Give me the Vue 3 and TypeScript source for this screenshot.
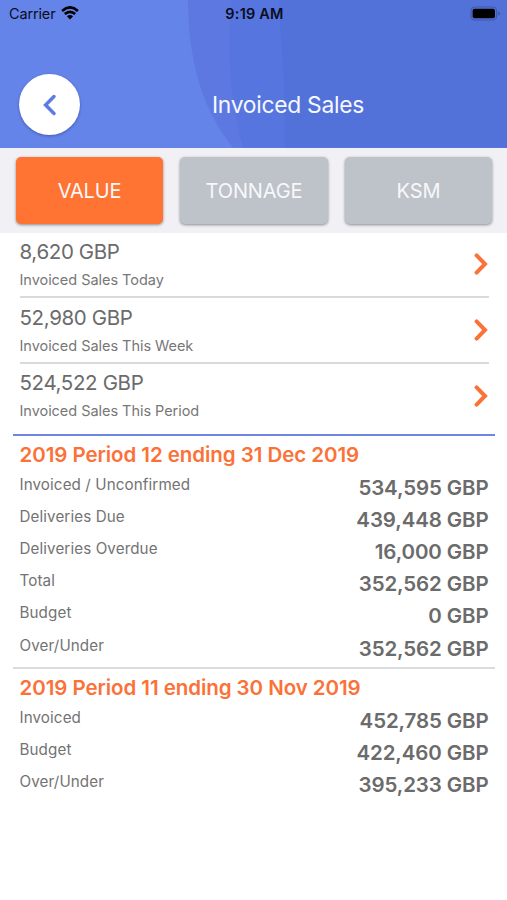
<script setup lang="ts">
import { ref } from 'vue'

interface Summary {
  amount: string
  label: string
}

interface Line {
  label: string
  value: string
}

interface Period {
  title: string
  lines: Line[]
}

const tabs: string[] = ['VALUE', 'TONNAGE', 'KSM']
const activeTab = ref<string>('VALUE')

const summaries: Summary[] = [
  { amount: '8,620 GBP', label: 'Invoiced Sales Today' },
  { amount: '52,980 GBP', label: 'Invoiced Sales This Week' },
  { amount: '524,522 GBP', label: 'Invoiced Sales This Period' },
]

const periods: Period[] = [
  {
    title: '2019 Period 12 ending 31 Dec 2019',
    lines: [
      { label: 'Invoiced / Unconfirmed', value: '534,595 GBP' },
      { label: 'Deliveries Due', value: '439,448 GBP' },
      { label: 'Deliveries Overdue', value: '16,000 GBP' },
      { label: 'Total', value: '352,562 GBP' },
      { label: 'Budget', value: '0 GBP' },
      { label: 'Over/Under', value: '352,562 GBP' },
    ],
  },
  {
    title: '2019 Period 11 ending 30 Nov 2019',
    lines: [
      { label: 'Invoiced', value: '452,785 GBP' },
      { label: 'Budget', value: '422,460 GBP' },
      { label: 'Over/Under', value: '395,233 GBP' },
    ],
  },
]
</script>

<template>
  <div class="screen">
    <header class="header">
      <svg class="backdrop" viewBox="0 0 507 148" preserveAspectRatio="none" aria-hidden="true">
        <path d="M188 0C188 60 202 110 233 148H507V0Z" fill="#5d79e1" />
        <path d="M231 0C228 50 229 100 243 148H507V0Z" fill="#5675df" />
        <path d="M279 0C280 40 286 70 285 148H507V0Z" fill="#5272da" />
      </svg>
      <div class="status">
        <div class="carrier">
          <span>Carrier</span>
          <svg class="wifi" viewBox="0 0 18 14" aria-hidden="true">
            <path d="M1.1 4.9Q9-2.1 16.9 4.9" />
            <path d="M3.8 8.1Q9 3.5 14.2 8.1" />
            <path class="dot" d="M5.9 10.3Q9 7.7 12.1 10.3L9 13.6Z" />
          </svg>
        </div>
        <div class="time">9:19 AM</div>
        <div class="power">
          <svg class="battery" viewBox="0 0 31 15" aria-hidden="true">
            <rect x="1" y="1" width="25.6" height="13" rx="3.8" fill="none" stroke="#3f58aa" stroke-width="1.2" />
            <rect x="2.6" y="2.7" width="22.4" height="9.6" rx="2" fill="#000" />
            <path d="M28 5.2Q30 6 30 7.5T28 9.8Z" fill="#3f58aa" />
          </svg>
        </div>
      </div>
      <div class="nav">
        <button class="back" type="button" aria-label="Back">
          <svg viewBox="0 0 14 22" aria-hidden="true">
            <path d="M11 2.6L2.6 11L11 19.4" />
          </svg>
        </button>
        <h1 class="title">Invoiced Sales</h1>
      </div>
    </header>

    <nav class="tabs">
      <button
        v-for="tab in tabs"
        :key="tab"
        type="button"
        class="tab"
        :class="{ active: tab === activeTab }"
        @click="activeTab = tab"
      >
        <span>{{ tab }}</span>
      </button>
    </nav>

    <section class="summaries">
      <div v-for="item in summaries" :key="item.label" class="summary">
        <div class="figures">
          <div class="amount">{{ item.amount }}</div>
          <div class="caption">{{ item.label }}</div>
        </div>
        <svg class="chevron" viewBox="0 0 14 22" aria-hidden="true">
          <path d="M2.6 2.4L11 11L2.6 19.6" />
        </svg>
      </div>
    </section>

    <section v-for="period in periods" :key="period.title" class="period">
      <h2 class="heading">{{ period.title }}</h2>
      <div v-for="line in period.lines" :key="line.label" class="line">
        <span class="label">{{ line.label }}</span>
        <span class="value">{{ line.value }}</span>
      </div>
    </section>
  </div>
</template>

<style>
body {
  margin: 0;
  background: #fff;
}
</style>

<style scoped>
.screen {
  width: 507px;
  height: 900px;
  overflow: hidden;
  background: #fff;
  color: #6b6b6b;
  font-family: Inter, 'Liberation Sans', sans-serif;
}

.header {
  position: relative;
  height: 147.6px;
  background: #6584ea;
}

.backdrop {
  position: absolute;
  inset: 0;
  width: 100%;
  height: 100%;
}

.status {
  position: relative;
  display: grid;
  grid-template-columns: 1fr auto 1fr;
  align-items: center;
  height: 28px;
  padding: 0 6px 0 9px;
  color: #0a0d1a;
  font-size: 14.5px;
  line-height: 28px;
}

.carrier {
  display: flex;
  align-items: center;
  gap: 6px;
  letter-spacing: -0.15px;
}

.wifi {
  width: 18px;
  height: 14px;
  margin-top: -2px;
  fill: none;
  stroke: #000;
  stroke-width: 2.7;
}

.wifi .dot {
  fill: #000;
  stroke: none;
}

.time {
  font-weight: 600;
  letter-spacing: 0.2px;
  margin-right: 1px;
}

.power {
  display: flex;
  justify-content: flex-end;
}

.battery {
  width: 31px;
  height: 15px;
  margin-top: -2px;
}

.nav {
  position: relative;
  display: grid;
  grid-template-columns: 61px 1fr 61px;
  align-items: center;
  padding: 46px 0 0 19px;
}

.back {
  display: flex;
  align-items: center;
  justify-content: center;
  width: 61px;
  height: 61px;
  padding: 0;
  border: 0;
  border-radius: 50%;
  background: #fff;
  box-shadow: 0 1px 3px rgba(20, 30, 90, 0.4);
}

.back svg {
  width: 14px;
  height: 22px;
  fill: none;
  stroke: #5d7be2;
  stroke-width: 3.5;
  stroke-linecap: round;
}

.title {
  margin: 0;
  padding-left: 50px;
  text-align: center;
  color: #f6f8ff;
  font-size: 22.8px;
  font-weight: 400;
  letter-spacing: -0.27px;
  line-height: 30px;
}

.tabs {
  display: grid;
  grid-template-columns: repeat(3, 1fr);
  gap: 17.4px;
  height: 85px;
  box-sizing: border-box;
  padding: 9px 15px 9px 16px;
  background: #f0f0f5;
}

.tab {
  padding: 2px 0 0;
  border: 0;
  border-radius: 5px;
  background: #bec2c9;
  box-shadow: 0 1px 3px rgba(0, 0, 0, 0.42);
  color: #f7f8fa;
  font-family: inherit;
  font-size: 20px;
  letter-spacing: -0.15px;
  line-height: 24px;
}

.tab.active {
  background: #ff7433;
}

.summaries {
  padding: 0 18px 0 19.5px;
}

.summary {
  display: flex;
  align-items: center;
  justify-content: space-between;
  height: 65.6px;
  box-sizing: border-box;
  border-bottom: 2px solid #d9dbdb;
}

.summary:last-child {
  height: 69.8px;
  padding-bottom: 6px;
  border-bottom: 0;
}

.figures {
  padding-top: 4px;
}

.summary:last-child .figures {
  padding-top: 2px;
}

.amount {
  font-size: 20.5px;
  letter-spacing: -0.36px;
  line-height: 28px;
}

.caption {
  color: #777;
  font-size: 14.5px;
  letter-spacing: -0.04px;
  line-height: 28px;
}

.chevron {
  width: 14px;
  height: 22px;
  margin-right: 1px;
  fill: none;
  stroke: #fb7238;
  stroke-width: 4;
  stroke-linecap: round;
}

.period {
  margin: 0 12.5px 0 13px;
  padding: 0 6px 0 6.5px;
  border-top: 2px solid #dadcdd;
}

.summaries + .period {
  border-top-color: #6f86df;
  padding-bottom: 0.4px;
}

.heading {
  margin: 0;
  color: #fb7238;
  font-size: 20.5px;
  font-weight: 600;
  letter-spacing: -0.06px;
  line-height: 38px;
}

.line {
  display: flex;
  justify-content: space-between;
  height: 32.2px;
}

.label {
  color: #737373;
  font-size: 15.2px;
  letter-spacing: 0.1px;
  line-height: 21px;
}

.value {
  color: #6b6b6b;
  font-size: 20.5px;
  font-weight: 600;
  letter-spacing: -0.12px;
  line-height: 27px;
}
</style>
